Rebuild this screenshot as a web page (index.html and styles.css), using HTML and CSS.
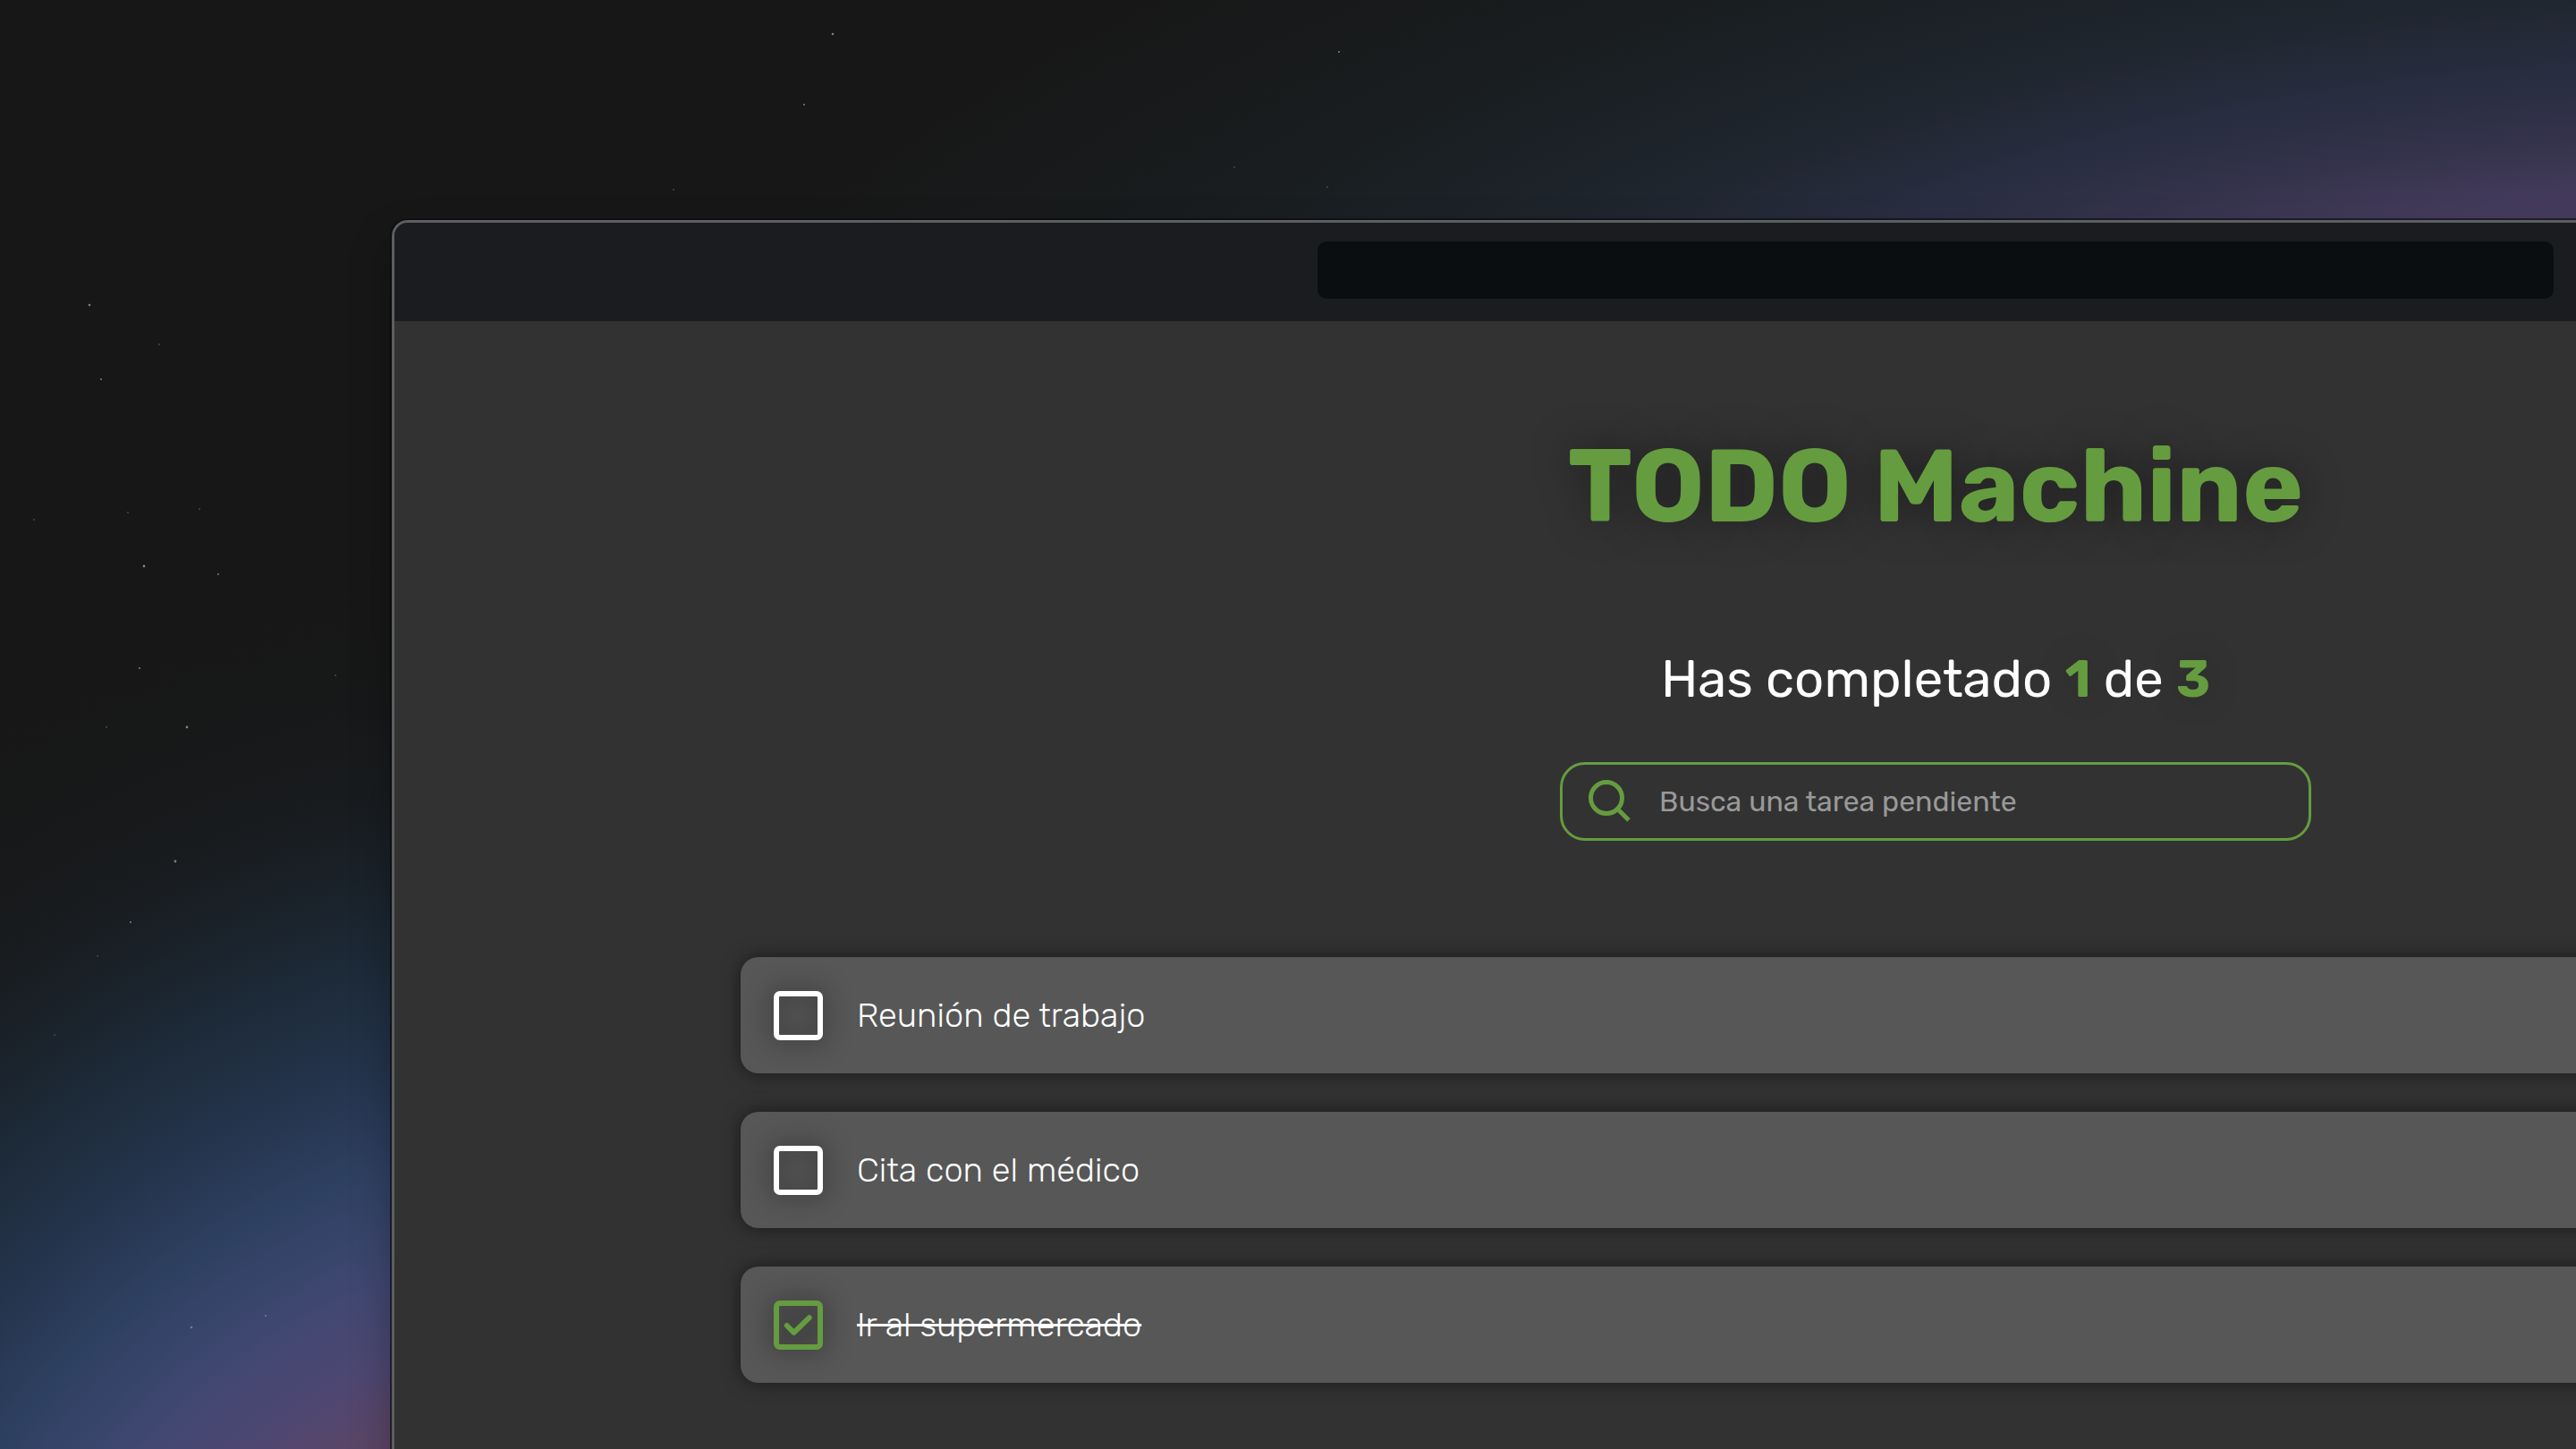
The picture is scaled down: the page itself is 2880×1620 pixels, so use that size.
FILE: index.html
```html
<!DOCTYPE html>
<html lang="es">
<head>
<meta charset="utf-8">
<meta name="viewport" content="width=device-width, initial-scale=1">
<title>TODO Machine</title>
<link rel="stylesheet" href="styles.css">
</head>
<body>
<svg class="stars" aria-hidden="true">
  <g fill="#7d8186">
    <circle cx="931" cy="38" r="1.3"/><circle cx="1497" cy="58" r="1"/><circle cx="899" cy="117" r="1"/>
    <circle cx="100" cy="341" r="1.3"/><circle cx="113" cy="424" r="1"/><circle cx="161" cy="633" r="1.4"/>
    <circle cx="244" cy="642" r="1"/><circle cx="156" cy="747" r="1"/><circle cx="209" cy="813" r="1.4"/>
    <circle cx="196" cy="963" r="1.4"/><circle cx="146" cy="1031" r="1"/><circle cx="297" cy="1471" r="1"/>
  </g>
  <g fill="#44484c">
    <circle cx="753" cy="212" r="1"/><circle cx="1380" cy="187" r="1"/><circle cx="1484" cy="209" r="1"/>
    <circle cx="178" cy="385" r="1"/><circle cx="38" cy="581" r="1"/><circle cx="143" cy="573" r="1"/>
    <circle cx="223" cy="569" r="1"/><circle cx="375" cy="755" r="1"/><circle cx="109" cy="1069" r="1"/>
    <circle cx="61" cy="1157" r="1"/><circle cx="119" cy="813" r="1"/>
  </g>
  <circle cx="214" cy="1484" r="1.3" fill="#747a98"/>
</svg>
<div class="window">
  <header class="titlebar">
    <input class="address" type="text" aria-label="Dirección">
  </header>
  <main class="app">
    <h1 class="title">TODO Machine</h1>
    <p class="counter">Has completado <strong>1</strong> de <strong>3</strong></p>
    <label class="search">
      <svg class="search-icon" viewBox="0 0 48 48" aria-hidden="true"><circle cx="21" cy="20" r="17.5"/><path d="M33.500 32.500 46 45"/></svg>
      <input class="search-input" type="search" placeholder="Busca una tarea pendiente" aria-label="Busca una tarea pendiente">
    </label>
    <ul class="list">
      <li><label class="item"><span class="check"><input type="checkbox"></span><span class="text">Reunión de trabajo</span></label></li>
      <li><label class="item"><span class="check"><input type="checkbox"></span><span class="text">Cita con el médico</span></label></li>
      <li><label class="item"><span class="check"><input type="checkbox" checked><svg class="tick" viewBox="0 0 56 56" aria-hidden="true"><path d="M15 28.500 23 36.500 40.500 19.500"/></svg></span><span class="text">Ir al supermercado</span></label></li>
    </ul>
  </main>
</div>
</body>
</html>
```
FILE: styles.css
```css
:root {
  --green: #659c3f;
}

* {
  box-sizing: border-box;
}

body {
  position: relative;
  display: flex;
  align-items: stretch;
  min-height: 100vh;
  max-height: 100vh;
  margin: 0;
  padding: 246px 0 0 438px;
  overflow: hidden;
  color: #fff;
  font-family: Rubik, Inter, "Noto Sans", sans-serif;
  background:
    radial-gradient(circle at 24% 130%, #5f4062 18vw, #594668 20vw, #4e4772 22vw, #414872 25vw, #2f4163 29vw, #24344c 33vw, #1d2a38 37vw, #1a222a 40vw, rgba(25, 29, 33, 0.8) 43vw, rgba(23, 25, 27, 0.4) 47vw, rgba(23, 23, 23, 0) 53vw),
    radial-gradient(66vw 28vw at 108% 43%, #4d3f66 50%, #443b5c 60%, #35334c 68%, #292e42 76%, #20262f 88%, #1c2228 96%, #191d1f 108%, #171717 130%);
  background-color: #171717;
}

.stars {
  position: absolute;
  inset: 0;
  width: 100%;
  height: 100%;
}

.window {
  position: relative;
  flex: none;
  width: 120vw;
  max-width: calc(120vw - 4px);
  overflow: hidden;
  background: #323232;
  border: 3px solid #5c5e60;
  border-bottom: 0;
  border-radius: 18px 18px 0 0;
  box-shadow: 0 0 0 2px rgba(8, 10, 14, 0.6), 0 24px 48px rgba(0, 0, 0, 0.3);
}

.titlebar {
  display: flex;
  justify-content: center;
  align-items: flex-start;
  height: 110px;
  padding-top: 21px;
  background: #1b1c20;
}

.address {
  width: 48vw;
  height: 64px;
  padding: 0 24px;
  border: 0;
  border-radius: 10px;
  color: #fff;
  font: 32px Inter, sans-serif;
  background: #0a0e11;
}

.app {
  display: flex;
  flex-direction: column;
  align-items: center;
  padding: 125px 387px 0;
}

.title {
  margin: 0 0 120px;
  color: var(--green);
  font-size: 115px;
  font-weight: 700;
  line-height: 120px;
  text-shadow: 0 0 48px rgba(0, 0, 0, 0.4);
}

.counter {
  margin: 0 0 56px;
  font-size: 58px;
  line-height: 72px;
}

.counter strong {
  color: var(--green);
  font-weight: 700;
  text-shadow: 0 0 40px rgba(0, 0, 0, 0.2);
}

.search {
  display: flex;
  align-items: center;
  gap: 32px;
  width: 840px;
  height: 88px;
  padding: 0 28px;
  border: 3px solid var(--green);
  border-radius: 28px;
}

.search-icon {
  flex: none;
  width: 48px;
  height: 48px;
  fill: none;
  stroke: var(--green);
  stroke-width: 5;
}

.search-input {
  flex: 1;
  min-width: 0;
  padding: 0;
  border: 0;
  outline: 0;
  color: #fff;
  font-family: inherit;
  font-size: 32px;
  background: none;
}

.search-input::placeholder {
  color: #999;
}

.list {
  display: flex;
  flex-direction: column;
  align-self: stretch;
  gap: 43px;
  margin: 130px 0 0;
  padding: 0;
  list-style: none;
}

.item {
  display: flex;
  align-items: center;
  gap: 38px;
  height: 130px;
  padding: 0 37px;
  border-radius: 20px;
  font-size: 38px;
  font-weight: 300;
  background: #575757;
  box-shadow: 0 0 20px rgba(0, 0, 0, 0.5);
}

.check {
  display: grid;
  filter: drop-shadow(0 0 14px rgba(0, 0, 0, 0.7));
}

.check > * {
  grid-area: 1 / 1;
  width: 55px;
  height: 55px;
}

.check input {
  margin: 0;
  border: 6px solid #fff;
  border-radius: 7px;
  appearance: none;
}

.check input:checked {
  border-color: var(--green);
}

.tick {
  fill: none;
  stroke: var(--green);
  stroke-width: 6;
  stroke-linecap: round;
  stroke-linejoin: round;
  pointer-events: none;
}

.item:has(:checked) .text {
  text-decoration: line-through;
}
```
